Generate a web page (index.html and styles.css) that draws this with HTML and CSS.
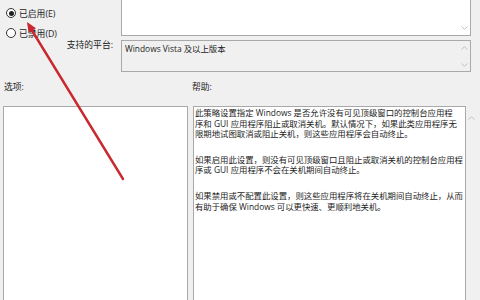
FILE: index.html
```html
<!DOCTYPE html>
<html lang="zh-CN">
<head>
<meta charset="utf-8">
<title>策略设置</title>
<link rel="stylesheet" href="styles.css">
</head>
<body>
<div class="dialog">
  <section class="top">
    <div class="radios">
      <div class="radio"><span class="dot on"></span><span>已启用(E)</span></div>
      <div class="radio"><span class="dot"></span><span>已禁用(D)</span></div>
    </div>
    <div class="box comment">
      <div class="scroll end">
        <svg class="chev" viewBox="0 0 7 4"><path d="M0.5 0.5 L3.5 3.3 L6.5 0.5"/></svg>
      </div>
    </div>
    <div class="plabel">支持的平台:</div>
    <div class="box platform">
      <div class="ptext">Windows Vista 及以上版本</div>
      <div class="scroll">
        <svg class="chev" viewBox="0 0 7 4"><path d="M0.5 3.5 L3.5 0.7 L6.5 3.5"/></svg>
        <svg class="chev" viewBox="0 0 7 4"><path d="M0.5 0.5 L3.5 3.3 L6.5 0.5"/></svg>
      </div>
    </div>
  </section>
  <section class="lower">
    <div class="lab lab-opt">选项:</div>
    <div class="lab lab-help">帮助:</div>
    <div class="box options"></div>
    <div class="box help">
      <p>此策略设置指定 Windows 是否允许没有可见顶级窗口的控制台应用程<br>序和 GUI 应用程序阻止或取消关机。默认情况下，如果此类应用程序无<br>限期地试图取消或阻止关机，则这些应用程序会自动终止。</p>
      <p>如果启用此设置，则没有可见顶级窗口且阻止或取消关机的控制台应用程<br>序或 GUI 应用程序不会在关机期间自动终止。</p>
      <p>如果禁用或不配置此设置，则这些应用程序将在关机期间自动终止，从而<br>有助于确保 Windows 可以更快速、更顺利地关机。</p>
    </div>
    <div class="hscroll">
      <svg class="chev" viewBox="0 0 7 4"><path d="M0.5 3.5 L3.5 0.7 L6.5 3.5"/></svg>
    </div>
  </section>
</div>
<svg class="annot" width="480" height="300" viewBox="0 0 480 300">
  <line x1="32" y1="30.5" x2="123" y2="179" stroke="#c8282e" stroke-width="2.4" stroke-linecap="round"/>
  <polygon points="27,22 28.6,33 36,28.2" fill="#c8282e"/>
</svg>
</body>
</html>
```
FILE: styles.css
```css
* { box-sizing: border-box; }
html, body { margin: 0; }
body {
  width: 480px;
  height: 300px;
  overflow: hidden;
  background: #f0f0f0;
  font-family: "Open Sans", "Noto Sans CJK SC", sans-serif;
  font-size: 8.4px;
  color: #1c1c1c;
  position: relative;
}
.dialog { width: 480px; height: 300px; }

.top {
  display: grid;
  grid-template-columns: 121px 350px;
  grid-template-rows: 36px 32px;
  row-gap: 4px;
}
.radios {
  grid-row: 1;
  grid-column: 1;
  padding: 3px 0 0 6px;
}
.radio {
  display: flex;
  align-items: center;
  gap: 3px;
  height: 20px;
  font-size: 8.8px;
}
.dot {
  width: 10px;
  height: 10px;
  border: 1px solid #333;
  border-radius: 50%;
  background: #fff;
  display: flex;
  align-items: center;
  justify-content: center;
}
.dot.on::after {
  content: "";
  width: 5px;
  height: 5px;
  border-radius: 50%;
  background: #222;
}

.box { border: 1px solid #a9a9a9; }
.comment {
  grid-row: 1;
  grid-column: 2;
  background: #fff;
  border-top: none;
  display: flex;
  justify-content: flex-end;
}
.scroll {
  width: 9px;
  margin-right: 1px;
  display: flex;
  flex-direction: column;
  justify-content: space-between;
  align-items: center;
  padding: 5px 0 4px;
}
.scroll.end { justify-content: flex-end; padding-bottom: 5px; }
.chev {
  width: 7px;
  height: 4px;
  fill: none;
  stroke: #c2c2c2;
  stroke-width: 1;
}
.plabel {
  grid-row: 2;
  grid-column: 1;
  text-align: right;
  padding: 0 8px 0 0;
  line-height: 11px;
  font-size: 8.8px;
}
.platform {
  grid-row: 2;
  grid-column: 2;
  display: flex;
  justify-content: space-between;
  background: #f0f0f0;
}
.ptext { padding: 2px 0 0 3px; line-height: 11px; }

.lower {
  display: grid;
  grid-template-columns: 185px 5px 273px auto;
  grid-template-rows: 34px 200px;
  margin-left: 3px;
}
.lab { padding-top: 10px; line-height: 11px; font-size: 8.8px; }
.lab-opt { grid-column: 1; padding-left: 1px; }
.lab-help { grid-column: 3; margin-left: -1px; }
.options { grid-row: 2; grid-column: 1; background: #fff; }
.help {
  grid-row: 2;
  grid-column: 3;
  background: #fff;
  padding: 1px 0 0 1px;
  line-height: 10.6px;
  white-space: nowrap;
  overflow: hidden;
}
.help p { margin: 0 0 15px; }
.hscroll {
  grid-row: 2;
  grid-column: 4;
  padding: 5px 0 0 2px;
}

.annot {
  position: absolute;
  left: 0;
  top: 0;
  pointer-events: none;
}
```
